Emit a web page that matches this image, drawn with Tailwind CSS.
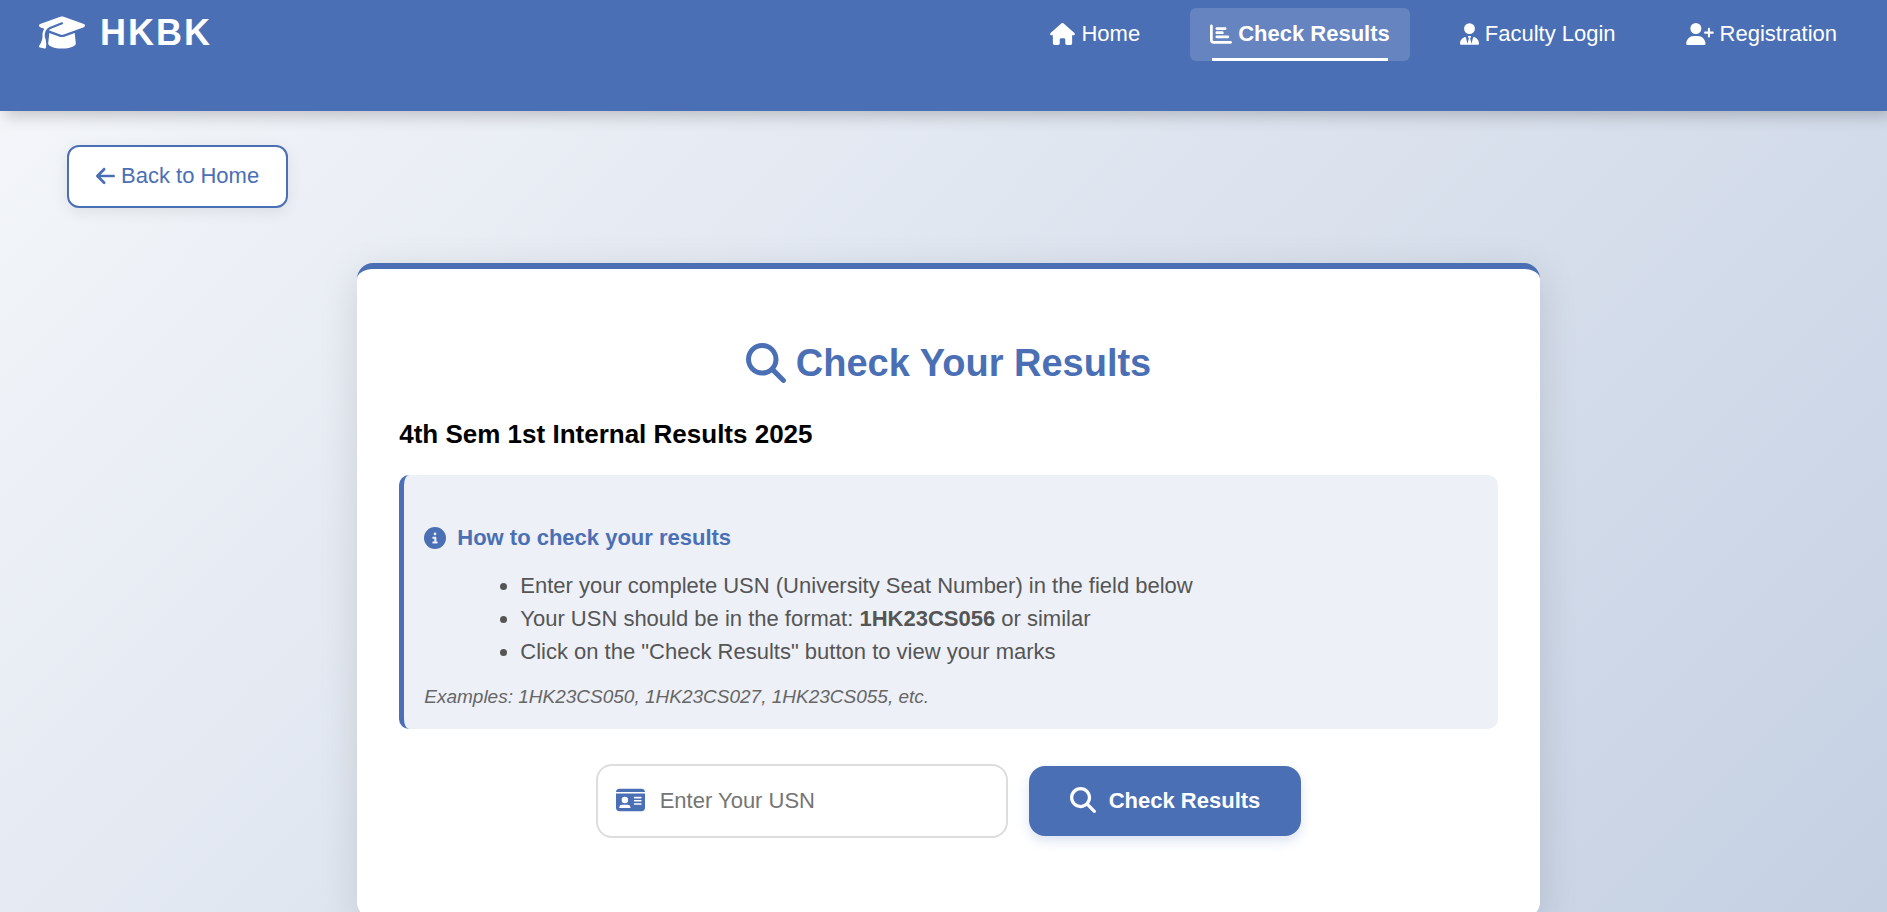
<!DOCTYPE html>
<html lang="en">
<head>
<meta charset="utf-8">
<meta name="viewport" content="width=device-width, initial-scale=1">
<title>HKBK - Check Results</title>
<script src="https://cdn.jsdelivr.net/npm/@tailwindcss/browser@4"></script>
</head>
<body class="min-h-screen overflow-x-hidden bg-linear-135 from-[#f5f7fa] to-[#c3cfe2] font-['Liberation_Sans',Arial,sans-serif] text-[22px] text-[#555]">
  <svg class="hidden" aria-hidden="true">
    <symbol id="search" viewBox="0 0 512 512"><path d="M416 208c0 45.9-14.9 88.3-40 122.7L502.6 457.4c12.5 12.5 12.5 32.8 0 45.3s-32.8 12.5-45.3 0L330.7 376c-34.4 25.2-76.8 40-122.7 40C93.1 416 0 322.9 0 208S93.1 0 208 0S416 93.1 416 208zM208 352a144 144 0 1 0 0-288 144 144 0 1 0 0 288z"/></symbol>
  </svg>

  <header class="relative flex min-h-[111px] items-start justify-between bg-[#4a6fb5] pr-[30px] pl-[39px] text-white shadow-[5px_5px_15px_rgba(0,0,0,0.2)]">
    <a href="#" class="flex items-center gap-[15px] pt-[11px] text-[36px]/[40px] font-bold tracking-[2px]">
      <svg class="h-[37px] w-[46px] fill-current" viewBox="0 0 640 512" aria-hidden="true"><path d="M320 32c-8.1 0-16.1 1.4-23.7 4.1L15.8 137.4C6.3 140.9 0 149.9 0 160s6.3 19.1 15.8 22.6l57.9 20.9C57.3 229.3 48 259.8 48 291.9v28.1c0 28.4-10.8 57.7-22.3 80.8c-6.5 13-13.9 25.8-22.5 37.6C0 442.7-.9 448.3 .9 453.4s6 8.9 11.2 10.2l64 16c4.2 1.1 8.7 .3 12.4-2s6.3-6.1 7.1-10.4c8.6-42.8 4.3-81.2-2.1-108.7C90.3 344.3 86 329.8 80 316.5V291.9c0-30.2 10.2-58.7 27.9-81.5c12.9-15.5 29.6-28 49.2-35.7l157-61.7c8.2-3.2 17.5 .8 20.7 9s-.8 17.5-9 20.7l-157 61.7c-12.4 4.9-23.3 12.4-32.2 21.6l159.6 57.6c7.6 2.7 15.6 4.1 23.7 4.1s16.1-1.4 23.7-4.1L624.2 182.6c9.5-3.4 15.8-12.5 15.8-22.6s-6.3-19.1-15.8-22.6L343.7 36.1C336.1 33.4 328.1 32 320 32zM128 408c0 35.3 86 72 192 72s192-36.7 192-72L496.7 262.6 354.5 314c-11.1 4-22.8 6-34.5 6s-23.5-2-34.5-6L143.3 262.6 128 408z"/></svg>
      <span class="pt-0.5">HKBK</span>
    </a>
    <nav class="pt-2">
      <ul class="flex gap-[30px] leading-[25px]">
        <li><a href="#" class="flex items-center gap-1.5 px-5 pt-[13px] pb-[15px]">
          <svg class="h-[22px] w-[25px] fill-current" viewBox="0 0 576 512" aria-hidden="true"><path d="M575.8 255.5c0 18-15 32.1-32 32.1l-32 0 .7 160.2c0 2.7-.2 5.4-.5 8.1l0 16.2c0 22.1-17.9 40-40 40l-16 0c-1.1 0-2.2 0-3.3-.1c-1.4 .1-2.8 .1-4.2 .1L416 512l-24 0c-22.1 0-40-17.9-40-40l0-24 0-64c0-17.7-14.3-32-32-32l-64 0c-17.7 0-32 14.3-32 32l0 64 0 24c0 22.1-17.9 40-40 40l-24 0-31.9 0c-1.5 0-3-.1-4.5-.2c-1.2 .1-2.4 .2-3.6 .2l-16 0c-22.1 0-40-17.9-40-40l0-112c0-.9 0-1.9 .1-2.8l0-69.7-32 0c-18 0-32-14-32-32.1c0-9 3-17 10-24L266.4 8c7-7 15-8 22-8s15 2 21 7L564.8 231.5c8 7 12 15 11 24z"/></svg>
          <span>Home</span></a></li>
        <li><a href="#" aria-current="page" class="relative flex items-center gap-1.5 rounded-md bg-white/15 px-5 pt-[13px] pb-[15px] font-bold after:absolute after:bottom-0 after:left-1/10 after:h-[3px] after:w-4/5 after:bg-white">
          <svg class="h-[22px] w-[22px] fill-current" viewBox="0 0 512 512" aria-hidden="true"><path d="M32 32c17.7 0 32 14.3 32 32V400c0 8.8 7.2 16 16 16H480c17.7 0 32 14.3 32 32s-14.3 32-32 32H80c-44.2 0-80-35.8-80-80V64C0 46.3 14.3 32 32 32zm96 96c0-17.7 14.3-32 32-32l192 0c17.7 0 32 14.3 32 32s-14.3 32-32 32H160c-17.7 0-32-14.3-32-32zm32 64H288c17.7 0 32 14.3 32 32s-14.3 32-32 32H160c-17.7 0-32-14.3-32-32s14.3-32 32-32zm0 96H416c17.7 0 32 14.3 32 32s-14.3 32-32 32H160c-17.7 0-32-14.3-32-32s14.3-32 32-32z"/></svg>
          <span>Check Results</span></a></li>
        <li><a href="#" class="flex items-center gap-1.5 px-5 pt-[13px] pb-[15px]">
          <svg class="h-[22px] w-[19px] fill-current" viewBox="0 0 448 512" aria-hidden="true"><path d="M96 128a128 128 0 1 0 256 0A128 128 0 1 0 96 128zm94.5 200.2l18.6 31L175.8 483.1l-36-146.9c-2-8.1-9.8-13.4-17.9-11.3C51.9 342.4 0 405.8 0 481.3c0 17 13.8 30.7 30.7 30.7l131.7 0c0 0 0 0 .1 0l5.5 0 112 0 5.5 0c0 0 0 0 .1 0l131.7 0c17 0 30.7-13.8 30.7-30.7c0-75.5-51.9-138.9-121.9-156.4c-8.1-2-15.9 3.3-17.9 11.3l-36 146.9L238.9 359.2l18.6-31c6.4-10.7-1.3-24.2-13.7-24.2L224 304l-19.7 0c-12.4 0-20.1 13.6-13.7 24.2z"/></svg>
          <span>Faculty Login</span></a></li>
        <li><a href="#" class="flex items-center gap-1.5 px-5 pt-[13px] pb-[15px]">
          <svg class="h-[22px] w-[28px] fill-current" viewBox="0 0 640 512" aria-hidden="true"><path d="M96 128a128 128 0 1 1 256 0A128 128 0 1 1 96 128zM0 482.3C0 383.8 79.8 304 178.3 304h91.4C368.2 304 448 383.8 448 482.3c0 16.4-13.3 29.7-29.7 29.7H29.7C13.3 512 0 498.7 0 482.3zM504 312V248H440c-13.3 0-24-10.7-24-24s10.7-24 24-24h64V136c0-13.3 10.7-24 24-24s24 10.7 24 24v64h64c13.3 0 24 10.7 24 24s-10.7 24-24 24H552v64c0 13.3-10.7 24-24 24s-24-10.7-24-24z"/></svg>
          <span>Registration</span></a></li>
      </ul>
    </nav>
  </header>

  <div class="flex pt-[34px] pl-[67px]">
    <a href="#" class="flex items-center gap-1.5 rounded-xl border-2 border-[#4a6fb5] bg-white px-[27px] pt-[16px] pb-[18px] leading-[25px] text-[#4a6fb5] shadow-[0_4px_15px_rgba(0,0,0,0.08)]">
      <svg class="h-[22px] w-[19px] fill-current" viewBox="0 0 448 512" aria-hidden="true"><path d="M9.4 233.4c-12.5 12.5-12.5 32.8 0 45.3l160 160c12.5 12.5 32.8 12.5 45.3 0s12.5-32.8 0-45.3L109.2 288 416 288c17.7 0 32-14.3 32-32s-14.3-32-32-32l-306.7 0L214.6 118.6c12.5-12.5 12.5-32.8 0-45.3s-32.8-12.5-45.3 0l-160 160z"/></svg>
      <span>Back to Home</span>
    </a>
  </div>

  <main class="pt-[55px] pb-20 pl-[10px]">
    <section class="mx-auto w-[63%] rounded-2xl border-t-6 border-[#4a6fb5] bg-white px-[42px] pt-[72px] pb-[80px] shadow-[0_10px_40px_rgba(0,0,0,0.12)]">
      <h1 class="flex items-center justify-center gap-2.5 text-[38px]/[44px] font-bold text-[#4a6fb5]">
        <svg class="size-10 fill-current" aria-hidden="true"><use href="#search"/></svg>
        <span>Check Your Results</span>
      </h1>
      <h2 class="mt-[34px] text-[26px]/[30px] font-bold text-black">4th Sem 1st Internal Results 2025</h2>

      <div class="mt-[26px] rounded-[10px] border-l-5 border-[#4a6fb5] bg-[#edf0f7] px-5 pt-[50px] pb-5">
        <h3 class="flex items-center gap-[11px] leading-[26px] font-bold text-[#4a6fb5]">
          <svg class="size-[22px] fill-current" viewBox="0 0 512 512" aria-hidden="true"><path d="M256 512A256 256 0 1 0 256 0a256 256 0 1 0 0 512zM216 336h24V272H216c-13.3 0-24-10.7-24-24s10.7-24 24-24h48c13.3 0 24 10.7 24 24v88h8c13.3 0 24 10.7 24 24s-10.7 24-24 24H216c-13.3 0-24-10.7-24-24s10.7-24 24-24zm40-208a32 32 0 1 1 0 64 32 32 0 1 1 0-64z"/></svg>
          <span>How to check your results</span>
        </h3>
        <ul class="mt-[18px] list-disc pl-24 leading-[33px]">
          <li>Enter your complete USN (University Seat Number) in the field below</li>
          <li>Your USN should be in the format: <strong>1HK23CS056</strong> or similar</li>
          <li>Click on the "Check Results" button to view your marks</li>
        </ul>
        <p class="mt-[17px] text-[19px]/[24px] text-[#666] italic">Examples: 1HK23CS050, 1HK23CS027, 1HK23CS055, etc.</p>
      </div>

      <form class="mt-[35px] flex flex-wrap items-center justify-center gap-[21px]">
        <label class="flex h-[74px] w-[412px] items-center gap-[15px] rounded-2xl border-2 border-[#ddd] bg-white px-[18px] pb-0.5">
          <svg class="h-[26px] w-[29px] shrink-0 fill-[#4a6fb5]" viewBox="0 0 576 512" aria-hidden="true"><path d="M0 96l576 0c0-35.3-28.7-64-64-64H64C28.7 32 0 60.7 0 96zm0 32V416c0 35.3 28.7 64 64 64H512c35.3 0 64-28.7 64-64V128H0zM64 405.3c0-29.5 23.9-53.3 53.3-53.3H234.7c29.5 0 53.3 23.9 53.3 53.3c0 5.9-4.8 10.7-10.7 10.7H74.7c-5.9 0-10.7-4.8-10.7-10.7zM176 192a64 64 0 1 1 0 128 64 64 0 1 1 0-128zm176 16c0-8.8 7.2-16 16-16H496c8.8 0 16 7.2 16 16s-7.2 16-16 16H368c-8.8 0-16-7.2-16-16zm0 64c0-8.8 7.2-16 16-16H496c8.8 0 16 7.2 16 16s-7.2 16-16 16H368c-8.8 0-16-7.2-16-16zm0 64c0-8.8 7.2-16 16-16H496c8.8 0 16 7.2 16 16s-7.2 16-16 16H368c-8.8 0-16-7.2-16-16z"/></svg>
          <input type="text" name="usn" aria-label="Enter Your USN" placeholder="Enter Your USN" class="w-full min-w-0 bg-transparent outline-none placeholder:text-[#757575]">
        </label>
        <button type="submit" class="flex h-[70px] items-center gap-[13px] rounded-2xl bg-[#4a6fb5] px-[41px] pb-0.5 font-bold text-white shadow-[0_5px_12px_rgba(74,111,181,0.2)]">
          <svg class="size-[26px] fill-current" aria-hidden="true"><use href="#search"/></svg>
          <span>Check Results</span>
        </button>
      </form>
    </section>
  </main>
</body>
</html>
